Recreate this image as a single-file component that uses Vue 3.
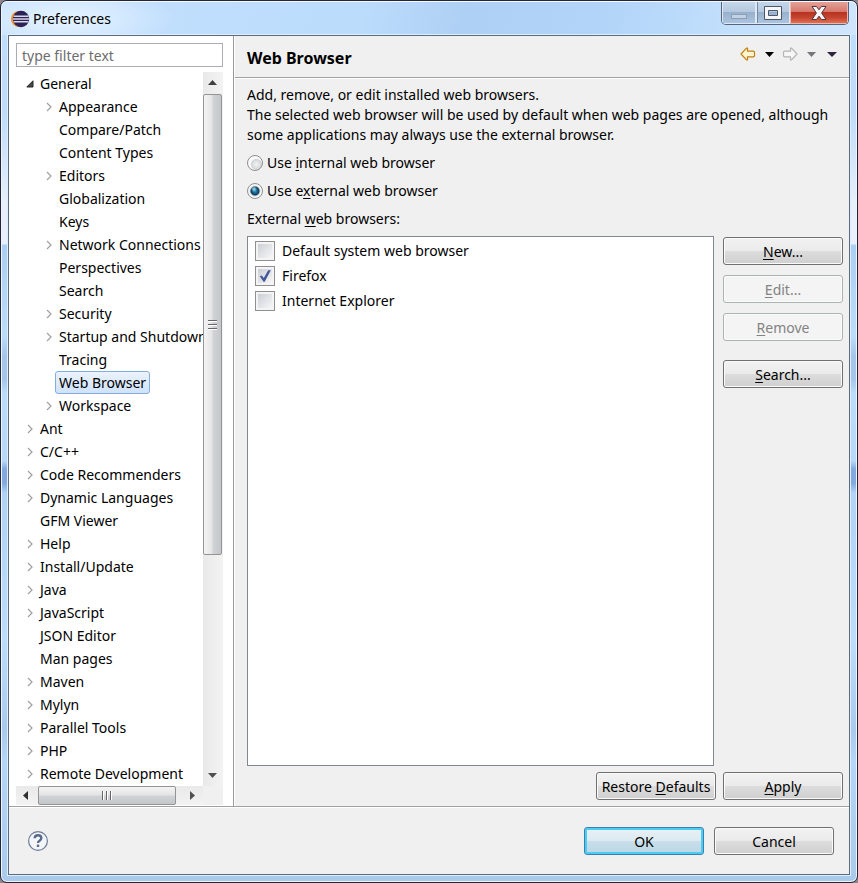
<script setup>
import { ref } from 'vue'

const filter = ref('')
const mode = ref('external')
const selected = ref('Web Browser')

const tree = [
  { label: 'General', level: 0, state: 'open' },
  { label: 'Appearance', level: 1, state: 'closed' },
  { label: 'Compare/Patch', level: 1 },
  { label: 'Content Types', level: 1 },
  { label: 'Editors', level: 1, state: 'closed' },
  { label: 'Globalization', level: 1 },
  { label: 'Keys', level: 1 },
  { label: 'Network Connections', level: 1, state: 'closed' },
  { label: 'Perspectives', level: 1 },
  { label: 'Search', level: 1 },
  { label: 'Security', level: 1, state: 'closed' },
  { label: 'Startup and Shutdown', level: 1, state: 'closed' },
  { label: 'Tracing', level: 1 },
  { label: 'Web Browser', level: 1 },
  { label: 'Workspace', level: 1, state: 'closed' },
  { label: 'Ant', level: 0, state: 'closed' },
  { label: 'C/C++', level: 0, state: 'closed' },
  { label: 'Code Recommenders', level: 0, state: 'closed' },
  { label: 'Dynamic Languages', level: 0, state: 'closed' },
  { label: 'GFM Viewer', level: 0 },
  { label: 'Help', level: 0, state: 'closed' },
  { label: 'Install/Update', level: 0, state: 'closed' },
  { label: 'Java', level: 0, state: 'closed' },
  { label: 'JavaScript', level: 0, state: 'closed' },
  { label: 'JSON Editor', level: 0 },
  { label: 'Man pages', level: 0 },
  { label: 'Maven', level: 0, state: 'closed' },
  { label: 'Mylyn', level: 0, state: 'closed' },
  { label: 'Parallel Tools', level: 0, state: 'closed' },
  { label: 'PHP', level: 0, state: 'closed' },
  { label: 'Remote Development', level: 0, state: 'closed' },
]

const browsers = ref([
  { name: 'Default system web browser', checked: false },
  { name: 'Firefox', checked: true },
  { name: 'Internet Explorer', checked: false },
])
</script>

<template>
  <div class="window">
    <header class="titlebar">
      <svg class="logo" width="20" height="18" viewBox="0 0 20 18">
        <circle cx="9" cy="9" r="8" fill="#f0962d" />
        <circle cx="11" cy="9" r="8.2" fill="#2c2255" />
        <path d="M3.5 6.2h15M3 9h16M3.5 11.8h15" stroke="#d9d7ea" stroke-width="1.4" />
      </svg>
      <span class="title">Preferences</span>
      <div class="controls">
        <button class="ctl min" aria-label="Minimize">
          <svg width="18" height="16" viewBox="0 0 18 16"><rect x="1.5" y="9.500" width="15" height="4" fill="#c3d2e2" stroke="#8b9fb6" /></svg>
        </button>
        <button class="ctl max" aria-label="Maximize">
          <svg width="20" height="16" viewBox="0 0 20 16"><path fill-rule="evenodd" d="M1.500 1.500h17v13h-17zM5.500 5.500v5h9v-5z" fill="#f6f6f6" stroke="#4b5668" /></svg>
        </button>
        <button class="ctl close" aria-label="Close">
          <svg width="18" height="16" viewBox="0 0 18 16"><path d="M2 1.500h4.500L9 4.800l2.500-3.300H16L11.600 8l4.400 6.500h-4.500L9 11.200l-2.500 3.300H2L6.400 8z" fill="#f7f7f7" stroke="#59333a" stroke-linejoin="round" /></svg>
        </button>
      </div>
    </header>

    <main class="client">
      <div class="panes">
        <aside class="side">
          <input v-model="filter" class="filter" type="text" placeholder="type filter text" aria-label="Filter preferences" />
          <div class="tree-box">
            <ul class="tree" role="tree">
              <li
                v-for="item in tree"
                :key="item.label"
                class="row"
                :class="{ child: item.level === 1 }"
                role="treeitem"
                :aria-selected="item.label === selected"
                @click="selected = item.label"
              >
                <span class="twisty">
                  <svg v-if="item.state === 'open'" width="8" height="8" viewBox="0 0 8 8"><path d="M7 .8V7H.8z" fill="#484848" stroke="#262626" /></svg>
                  <svg v-else-if="item.state === 'closed'" width="6" height="10" viewBox="0 0 6 10"><path d="M1 1l4 4-4 4" fill="none" stroke="#a0a0a0" stroke-width="1.200" /></svg>
                </span>
                <span class="label" :class="{ selected: item.label === selected }">{{ item.label }}</span>
              </li>
            </ul>
            <div class="vbar">
              <svg class="arrow" width="9" height="5" viewBox="0 0 9 5"><path d="M0 5l4.500-5L9 5z" fill="#404040" /></svg>
              <div class="vthumb">
                <svg width="9" height="11" viewBox="0 0 9 11"><path d="M0 1.500h9M0 5.500h9M0 9.500h9" stroke="#666" /><path d="M0 2.500h9M0 6.500h9M0 10.500h9" stroke="#fff" /></svg>
              </div>
              <span class="vrest"></span>
              <svg class="arrow" width="9" height="5" viewBox="0 0 9 5"><path d="M0 0h9L4.500 5z" fill="#505050" /></svg>
            </div>
            <div class="hbar">
              <svg class="arrow" width="5" height="9" viewBox="0 0 5 9"><path d="M5 0v9L0 4.500z" fill="#303030" /></svg>
              <div class="hthumb">
                <svg width="11" height="9" viewBox="0 0 11 9"><path d="M.5 0v9M4.500 0v9M8.500 0v9" stroke="#666" /><path d="M1.500 0v9M5.500 0v9M9.500 0v9" stroke="#fff" /></svg>
              </div>
              <svg class="arrow" width="5" height="9" viewBox="0 0 5 9"><path d="M0 0v9l5-4.500z" fill="#505050" /></svg>
            </div>
            <span class="corner"></span>
          </div>
        </aside>

        <section class="page">
          <div class="page-head">
            <h1>Web Browser</h1>
            <nav class="history">
              <button class="nav" aria-label="Back">
                <svg width="16" height="14" viewBox="0 0 16 14"><path d="M7.500 1.200v3h5.700q1.300 0 1.300 1.300v3q0 1.300-1.300 1.300H7.500v3h-1L1 7l5.500-5.800z" fill="#fff6cf" stroke="#bf7f12" stroke-width="1.200" stroke-linejoin="round" /></svg>
              </button>
              <button class="nav" aria-label="Back history"><svg width="9" height="5" viewBox="0 0 9 5"><path d="M0 0h9L4.500 5z" fill="#000" /></svg></button>
              <button class="nav" aria-label="Forward">
                <svg width="16" height="14" viewBox="0 0 16 14"><path d="M8.500 1.200v3H2.800Q1.500 4.200 1.500 5.500v3q0 1.300 1.300 1.300h5.700v3h1L15 7 9.500 1.200z" fill="#f6f6f6" stroke="#b4b4b4" stroke-width="1.200" stroke-linejoin="round" /></svg>
              </button>
              <button class="nav" aria-label="Forward history"><svg width="9" height="5" viewBox="0 0 9 5"><path d="M0 0h9L4.500 5z" fill="#76767c" /></svg></button>
              <button class="nav" aria-label="View menu"><svg width="10" height="5" viewBox="0 0 10 5"><path d="M0 0h10L5 5z" fill="#2b2340" /></svg></button>
            </nav>
          </div>

          <div class="page-body">
            <p class="desc">
              Add, remove, or edit installed web browsers.<br />
              The selected web browser will be used by default when web pages are opened, although some applications may always use the external browser.
            </p>
            <label class="radio-row"><input v-model="mode" type="radio" name="mode" value="internal" /><span>Use <u>i</u>nternal web browser</span></label>
            <label class="radio-row"><input v-model="mode" type="radio" name="mode" value="external" /><span>Use e<u>x</u>ternal web browser</span></label>
            <div id="list-label" class="list-label">External <u>w</u>eb browsers:</div>

            <div class="columns">
              <div class="list" role="group" aria-labelledby="list-label">
                <label v-for="b in browsers" :key="b.name" class="check-row">
                  <span class="check">
                    <input v-model="b.checked" type="checkbox" />
                    <svg v-if="b.checked" class="tick" width="14" height="14" viewBox="0 0 14 14"><path d="M1.800 7.200l2-.8 2 2.600L10.200 1.300h2.600L6.700 12.800H5.500z" fill="#41599c" /></svg>
                  </span>
                  <span>{{ b.name }}</span>
                </label>
              </div>
              <div class="side-buttons">
                <button class="btn"><span><u>N</u>ew...</span></button>
                <button class="btn" disabled><span><u>E</u>dit...</span></button>
                <button class="btn" disabled><span><u>R</u>emove</span></button>
                <button class="btn search"><span><u>S</u>earch...</span></button>
              </div>
            </div>

            <div class="page-actions">
              <button class="btn"><span>Restore <u>D</u>efaults</span></button>
              <button class="btn"><span><u>A</u>pply</span></button>
            </div>
          </div>
        </section>
      </div>

      <footer class="footer">
        <button class="help" aria-label="Help">
          <svg width="22" height="22" viewBox="0 0 22 22">
            <circle cx="11" cy="11" r="9.400" fill="#f4f5f8" stroke="#6b7b97" stroke-width="1.200" />
            <path d="M7.700 8.300Q7.700 5.200 11 5.200t3.300 2.900q0 1.600-1.700 2.600-1.600.9-1.600 2.300" fill="none" stroke="#586b8c" stroke-width="2.400" />
            <rect x="9.800" y="14.600" width="2.400" height="2.400" fill="#586b8c" />
          </svg>
        </button>
        <button class="btn ok">OK</button>
        <button class="btn">Cancel</button>
      </footer>
    </main>
  </div>
</template>

<style>
body {
  background: #8d8788;
}
</style>

<style scoped>
* {
  box-sizing: border-box;
}

.window {
  display: flex;
  flex-direction: column;
  min-height: 100vh;
  padding: 0 6px 6px;
  border: 1px solid #23263a;
  border-radius: 7px;
  box-shadow: inset 0 0 0 1px #eef7ff;
  background: linear-gradient(
    180deg,
    #bfdefd 0,
    #bfdcfa 110px,
    #e6effa 200px,
    #e8f1fb 243px,
    #abcff2 244px,
    #bcdcfb 335px,
    #a5c5ea 355px,
    #a5c5ea 378px,
    #bcdcfc 392px,
    #b8d8f9 460px,
    #83a9de 468px,
    #83a9de 482px,
    #b0d3f6 492px,
    #bcddfd 640px,
    #a9caed 730px,
    #b4d6f8 760px,
    #a9caea 100%
  );
  color: #000;
  font: 14px/20px "Noto Sans", "Open Sans", sans-serif;
}

button,
input {
  margin: 0;
  font: inherit;
  color: inherit;
}

u {
  text-underline-offset: 2px;
}

.titlebar {
  display: flex;
  align-items: flex-start;
  height: 34px;
  margin: 0 -5px;
  padding: 0 7px 0 8px;
  border-top: 1px solid #f4faff;
  border-radius: 6px 6px 0 0;
  background:
    radial-gradient(ellipse 110px 34px at 64px 17px, #e6f3ff 0, #e6f3ff88 50%, #e6f3ff00 100%),
    linear-gradient(100deg, #c3e0fd 0, #bcdcfc 42%, #aed0f4 54%, #b1d4f8 70%, #c2dffc 85%, #cfe5fc 100%);
}

.logo {
  margin-top: 8px;
}

.title {
  flex: 1;
  margin: 7px 0 0 3px;
}

.controls {
  display: flex;
  height: 23px;
  overflow: hidden;
  border: 1px solid #566579;
  border-top: 0;
  border-radius: 0 0 5px 5px;
}

.ctl {
  display: flex;
  align-items: center;
  justify-content: center;
  padding: 0;
  border: 1px solid #dce9f7;
  border-top: 0;
  background: linear-gradient(180deg, #c5d6e8 0, #b3c7de 50%, #97b0cb 50%, #acc4df 100%);
}

.min {
  width: 34px;
}

.max {
  width: 34px;
  box-shadow: inset 1px 0 #7688a0;
}

.close {
  width: 58px;
  border-color: #efb7ac;
  background: linear-gradient(180deg, #e3a397 0, #d5766a 48%, #b93420 50%, #c54530 75%, #df7055 100%);
}

.client {
  display: flex;
  flex: 1;
  flex-direction: column;
  border: 1px solid #5d6b7f;
  outline: 1px solid #dceeff;
  background: #f0f0f0;
  margin: 0 1px 1px;
}

.panes {
  display: flex;
  flex: 1;
  border-bottom: 1px solid #a0a0a0;
}

.side {
  display: flex;
  flex-direction: column;
  width: 225px;
  padding: 7px 10px 1px 7px;
  border-right: 1px solid #999;
  background: #fff;
}

.filter {
  width: 100%;
  height: 24px;
  padding: 0 5px;
  border: 1px solid #abadb3;
  border-radius: 0;
  outline: 0;
  background: #fff;
}

.filter::placeholder {
  color: #6d6d6d;
  opacity: 1;
}

.tree-box {
  display: grid;
  flex: 1;
  grid-template-columns: minmax(0, 1fr) 20px;
  grid-template-rows: 1fr 19px;
  margin-top: 5px;
}

.tree {
  margin: 0;
  padding: 0 0 0 8px;
  overflow: hidden;
  list-style: none;
  white-space: nowrap;
}

.row {
  display: flex;
  align-items: center;
  height: 23px;
}

.child {
  padding-left: 19px;
}

.twisty {
  display: flex;
  flex: none;
  align-items: center;
  justify-content: center;
  width: 12px;
}

.label {
  padding: 0 3px;
  border: 1px solid transparent;
  border-radius: 3px;
  line-height: 21px;
}

.label.selected {
  border-color: #84acdd;
  background: linear-gradient(180deg, #ebf3fd, #cfe3fc);
}

.vbar {
  display: flex;
  flex-direction: column;
  align-items: center;
  padding: 8px 1px 8px 0;
  background: linear-gradient(90deg, #e9e9e9, #f3f3f3);
}

.vthumb {
  display: flex;
  flex: 460;
  align-items: center;
  justify-content: center;
  width: 19px;
  margin-top: 9px;
  border: 1px solid #949494;
  border-radius: 2px;
  background: linear-gradient(90deg, #f4f4f4 0, #e4e4e6 48%, #d2d3d6 52%, #c5c6ca 100%);
}

.vrest {
  flex: 219;
}

.hbar {
  display: flex;
  align-items: center;
  padding: 0 8px 0 7px;
  background: linear-gradient(180deg, #e9e9e9, #f3f3f3);
}

.hthumb {
  display: flex;
  flex: 1;
  align-items: center;
  justify-content: center;
  height: 19px;
  margin: 0 14px 0 10px;
  border: 1px solid #949494;
  border-radius: 2px;
  background: linear-gradient(180deg, #f4f4f4 0, #e4e4e6 48%, #d2d3d6 52%, #c5c6ca 100%);
}

.arrow {
  flex: none;
}

.corner {
  background: #f0f0f0;
}

.page {
  display: flex;
  flex: 1;
  flex-direction: column;
  min-width: 0;
  border-left: 1px solid #fff;
}

.page-head {
  display: flex;
  align-items: center;
  justify-content: space-between;
  height: 42px;
  padding: 0 9px 0 12px;
  border-bottom: 1px solid #a0a0a0;
}

h1 {
  margin: 3px 0 0;
  font-size: 16px;
  line-height: 22px;
}

.history {
  display: flex;
  align-items: center;
  gap: 5px;
  margin-bottom: 5px;
}

.nav,
.help {
  display: flex;
  padding: 0;
  border: 0;
  background: none;
}

.nav {
  justify-content: center;
  width: 16px;
}

.page-body {
  display: flex;
  flex: 1;
  flex-direction: column;
  padding: 6px 6px 6px 12px;
  border-top: 1px solid #fff;
}

.desc {
  margin: 0;
}

.radio-row {
  display: flex;
  gap: 4px;
  align-items: center;
  margin-top: 8px;
}

.radio-row input {
  width: 16px;
  height: 16px;
  border: 1px solid #8e8f8f;
  border-radius: 50%;
  appearance: none;
  background: radial-gradient(circle at 60% 60%, #f4f4f4 0, #d2d5d9 5px, #fafafa 6px);
}

.radio-row input:checked {
  background:
    radial-gradient(circle at 6px 5px, #a8e8fa 0, #a8e8fa00 3px),
    radial-gradient(circle, #2d93c4 0, #0e3c5e 4px, #cfd5da 5px, #fafafa 6px);
}

.list-label {
  margin-top: 8px;
}

.columns {
  display: flex;
  flex: 1;
  gap: 9px;
  margin-top: 7px;
}

.list {
  flex: 1;
  padding: 1px 7px;
  border: 1px solid #828790;
  background: #fff;
}

.check-row {
  display: flex;
  gap: 7px;
  align-items: center;
  height: 25px;
}

.check {
  display: grid;
  place-items: center;
}

.check input,
.tick {
  grid-area: 1 / 1;
}

.tick {
  z-index: 1;
  pointer-events: none;
}

.check input {
  width: 20px;
  height: 20px;
  border: 1px solid #8e8f8f;
  border-radius: 0;
  appearance: none;
  background: linear-gradient(135deg, #cbcfd5, #f6f6f6) content-box, #f4f4f4;
  padding: 2px;
}

.side-buttons {
  display: flex;
  flex-direction: column;
  gap: 10px;
  padding-top: 1px;
}

.btn {
  width: 120px;
  height: 28px;
  padding: 2px 0 0;
  border: 1px solid #707070;
  border-radius: 3px;
  box-shadow: inset 0 0 0 1px #fbfbfb;
  background: linear-gradient(180deg, #f2f2f2 0, #ebebeb 48%, #dddddd 50%, #cfcfcf 100%);
  white-space: nowrap;
}

.btn:disabled {
  border-color: #adb2b5;
  background: #f4f4f4;
  color: #838383;
}

.search {
  margin-top: 9px;
}

.page-actions {
  display: flex;
  gap: 7px;
  justify-content: flex-end;
  margin-top: 6px;
}

.footer {
  display: flex;
  gap: 10px;
  align-items: center;
  height: 67px;
  padding: 0 15px 0 18px;
  border-top: 1px solid #fff;
}

.help {
  margin-right: auto;
}

.ok {
  border-color: #3c7fb1;
  box-shadow: inset 0 0 0 2px #49cdf3;
  background: linear-gradient(180deg, #e9f2f6 0, #dceaf1 48%, #c8dfea 50%, #bbd6e5 100%);
}
</style>
